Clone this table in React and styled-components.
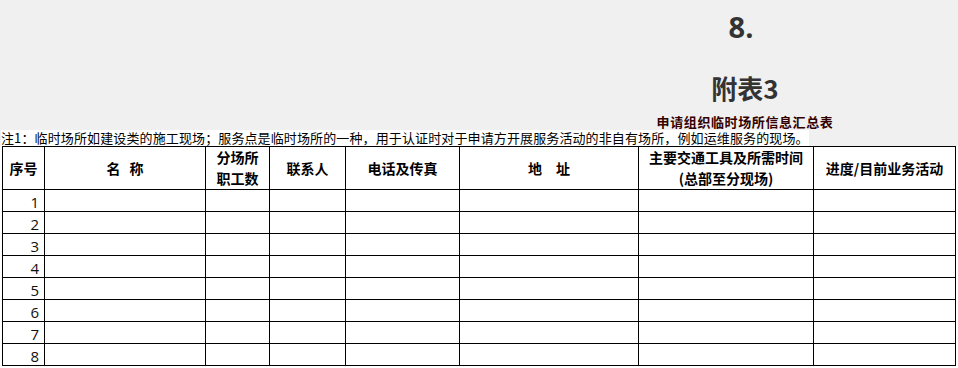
import React from 'react';
import styled, { createGlobalStyle } from 'styled-components';

const GlobalStyle = createGlobalStyle`
  html, body {
    margin: 0;
    padding: 0;
    background: #fff;
  }
  body {
    font-family: "Noto Sans CJK SC", "Noto Sans", sans-serif;
    color: #000;
  }
`;

const Banner = styled.header`
  background: #f0f0f0;
  display: flex;
  flex-direction: column;
`;

const TitleBlock = styled.div`
  margin-left: 532px;
  width: 426px;
  display: flex;
  flex-direction: column;
  align-items: center;
  text-align: center;
`;

const SectionNo = styled.div`
  margin-top: 9px;
  margin-right: 8px;
  font-family: "Open Sans", "Noto Sans", sans-serif;
  font-weight: 700;
  font-size: 29px;
  line-height: 36px;
  color: #333;
`;

const Heading = styled.h1`
  margin: 30px 0 0;
  font-family: "Noto Sans CJK SC", sans-serif;
  font-weight: 700;
  font-size: 26px;
  line-height: 26px;
  color: #333;
`;

const Subtitle = styled.h2`
  margin: 15px 0 2px;
  font-family: "Noto Sans CJK SC", sans-serif;
  font-weight: 700;
  font-size: 13px;
  line-height: 12px;
  height: 12px;
  letter-spacing: 0.6px;
  color: #330000;
  white-space: nowrap;
`;

const Note = styled.p`
  margin: 0;
  padding-left: 1px;
  font-family: "Noto Sans CJK SC", sans-serif;
  font-size: 13px;
  line-height: 16px;
  letter-spacing: 0.12px;
  white-space: nowrap;
`;

const NoteText = styled.span`
  background: #fff;
  display: inline-block;
`;

const Sheet = styled.div`
  margin-left: 2px;
  display: grid;
  grid-template-columns: 41px 160px 63px 75px 113px 178px 174px 141px;
  grid-template-rows: 42px repeat(8, 21px);
  gap: 1px;
  padding: 1px;
  background: #000;
  width: max-content;
`;

const HeadCell = styled.div`
  background: #fff;
  display: flex;
  flex-direction: column;
  align-items: center;
  justify-content: center;
  text-align: center;
  font-family: "Noto Sans CJK SC", sans-serif;
  font-weight: 700;
  font-size: 14px;
  line-height: 21px;
  white-space: nowrap;
`;

const Spaced = styled.span`
  letter-spacing: ${(p) => p.$gap}px;
  padding-left: ${(p) => p.$gap}px;
`;

const NumCell = styled.div`
  background: #fff;
  display: flex;
  align-items: flex-end;
  justify-content: flex-end;
  padding-right: 5px;
  font-family: "Open Sans", "Noto Sans", sans-serif;
  font-size: 15px;
  line-height: 18px;
  color: #111;
`;

const Cell = styled.div`
  background: #fff;
`;

const headers = [
  ['序号'],
  [<Spaced key="n" $gap={9}>名称</Spaced>],
  ['分场所', '职工数'],
  ['联系人'],
  ['电话及传真'],
  [<Spaced key="a" $gap={14}>地址</Spaced>],
  ['主要交通工具及所需时间', '(总部至分现场)'],
  ['进度/目前业务活动'],
];

const rows = [1, 2, 3, 4, 5, 6, 7, 8];

export default function App() {
  return (
    <>
      <GlobalStyle />
      <Banner>
        <TitleBlock>
          <SectionNo>8.</SectionNo>
          <Heading>附表3</Heading>
          <Subtitle>申请组织临时场所信息汇总表</Subtitle>
        </TitleBlock>
        <Note>
          <NoteText>
            注1：临时场所如建设类的施工现场；服务点是临时场所的一种，用于认证时对于申请方开展服务活动的非自有场所，例如运维服务的现场。
          </NoteText>
        </Note>
      </Banner>
      <Sheet>
        {headers.map((lines, i) => (
          <HeadCell key={`h${i}`}>
            {lines.map((l, j) => (
              <div key={j}>{l}</div>
            ))}
          </HeadCell>
        ))}
        {rows.map((n) => (
          <React.Fragment key={n}>
            <NumCell>{n}</NumCell>
            {headers.slice(1).map((_, c) => (
              <Cell key={c} />
            ))}
          </React.Fragment>
        ))}
      </Sheet>
    </>
  );
}
